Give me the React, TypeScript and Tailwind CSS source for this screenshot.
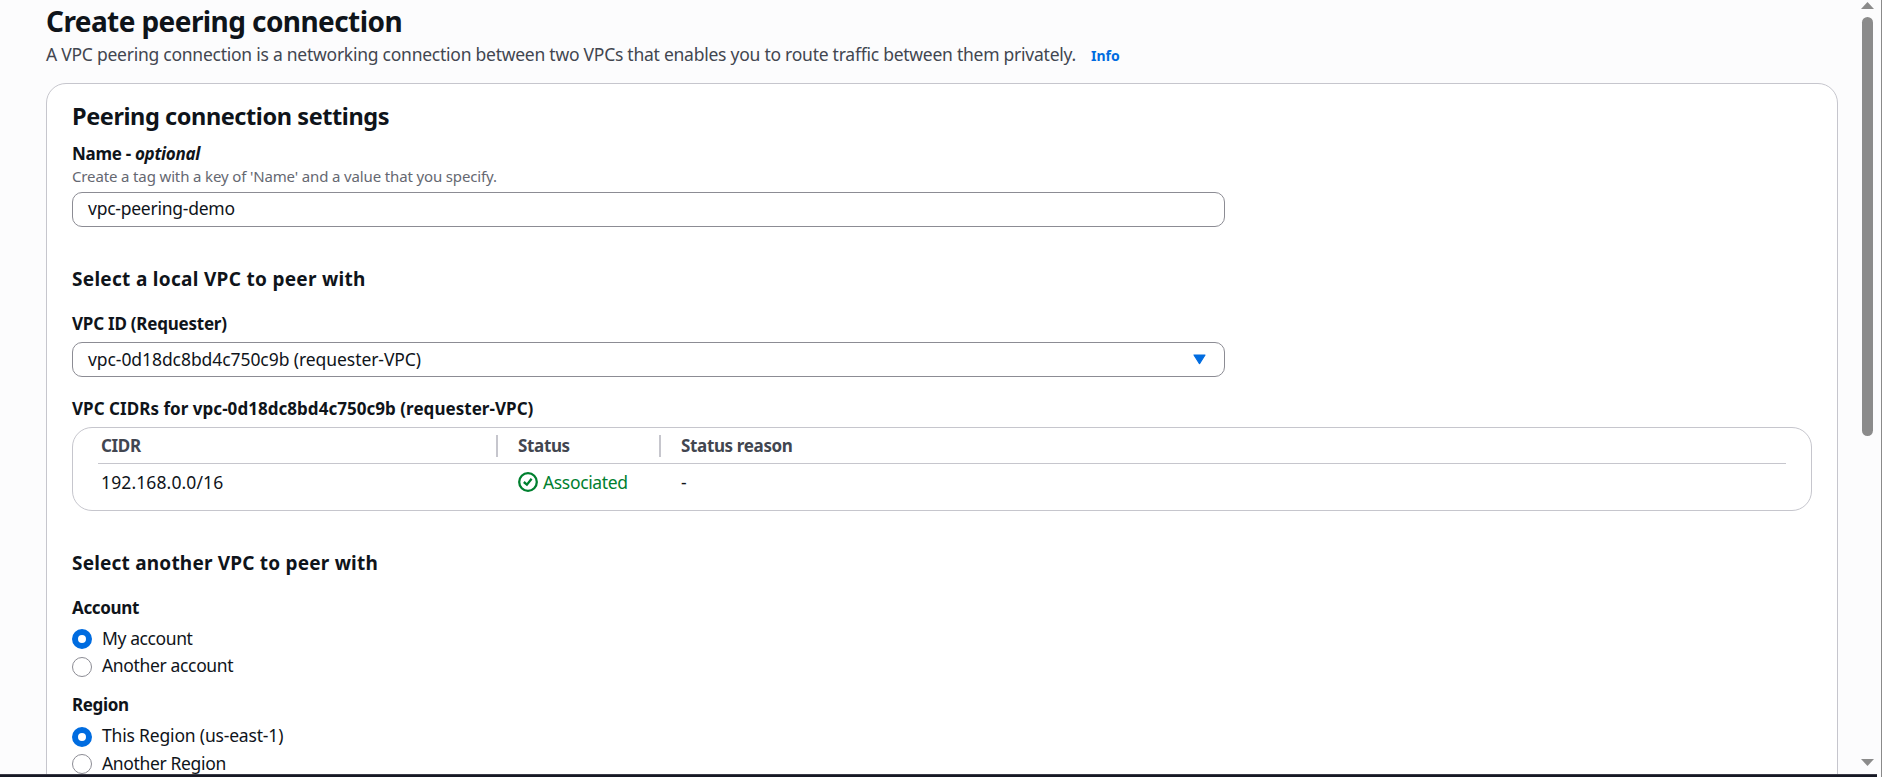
import type { ReactNode } from "react";

function Label({ children, className = "" }: { children: ReactNode; className?: string }) {
  return <div className={`h-6 whitespace-pre text-[17px] leading-6 font-bold ${className}`}>{children}</div>;
}

function SectionTitle({ children, className }: { children: ReactNode; className: string }) {
  return (
    <h3 className={`h-7 self-start whitespace-nowrap text-[19px] leading-7 font-bold ${className}`}>
      {children}
    </h3>
  );
}

function Radio({ label, checked = false, className = "", dot = "mt-[3px]" }: { label: string; checked?: boolean; className?: string; dot?: string }) {
  return (
    <label className={`flex shrink-0 items-start gap-2.5 text-[17.5px] leading-6 ${className}`}>
      <span
        className={`size-5 shrink-0 rounded-full bg-white ${dot} ${checked ? "border-6 border-[#006ce0]" : "border border-[#8c8c94]"}`}
      />
      <span>{label}</span>
    </label>
  );
}

function StatusIcon() {
  return (
    <svg width="20" height="20" viewBox="0 0 20 20" fill="none" stroke="#00802f" strokeWidth="2.3" className="mt-[2px]">
      <circle cx="10" cy="10" r="8.8" />
      <path d="M5.8 10 8.9 12.6 13.6 6.8" />
    </svg>
  );
}

function Scrollbar() {
  return (
    <div className="flex w-[21px] shrink-0 flex-col items-center border-r border-[#8a8a8a] pt-0.5 pr-[7px] pb-[11px]">
      <svg width="13" height="7" viewBox="0 0 13 7" className="shrink-0">
        <path d="M6.5 0 13 7H0Z" fill="#8b8b8b" />
      </svg>
      <div className="mt-2 h-[419px] w-[11px] rounded-full bg-[#8b8b8b]" />
      <svg width="13" height="7" viewBox="0 0 13 7" className="mt-auto shrink-0">
        <path d="M0 0h13L6.5 7Z" fill="#8b8b8b" />
      </svg>
    </div>
  );
}

export default function App() {
  return (
    <div className="flex h-[777px] w-[1882px] overflow-hidden bg-[#fcfcfd] font-['Noto_Sans',sans-serif] text-[#0f141a]">
      <div className="flex min-w-0 flex-1 flex-col">
        <main className="flex min-h-0 flex-1 flex-col overflow-hidden pt-[5px] pr-[23px] pl-[46px]">
          <h1 className="h-8 shrink-0 text-[28px] leading-8 font-bold tracking-[-0.58px]">Create peering connection</h1>
          <div className="mt-[5px] flex h-6 shrink-0 items-baseline gap-[15px] text-[17.5px] leading-6 whitespace-nowrap text-[#424650]">
            <span className="tracking-[-0.25px]">
              A VPC peering connection is a networking connection between two VPCs that enables you to route traffic between them privately.
            </span>
            <a className="text-[14px] font-bold text-[#006ce0]">Info</a>
          </div>

          <section className="mt-[17px] flex h-[820px] shrink-0 flex-col rounded-[20px] border border-[#c6c6cd] bg-white px-[25px]">
            <h2 className="mt-[17px] h-[30px] text-[23.5px] leading-[30px] font-bold tracking-[-0.42px]">Peering connection settings</h2>

            <Label className="mt-[11px] tracking-[-0.3px]">
              Name - <em>optional</em>
            </Label>
            <div className="h-5 text-[15px] leading-5 tracking-[-0.14px] text-[#656871]">
              Create a tag with a key of 'Name' and a value that you specify.
            </div>
            <div className="mt-[6px] h-[35px] w-[1153px] rounded-[10px] border border-[#8c8c94] px-[15px] text-[17.5px] leading-[30px] tracking-[-0.25px]">
              vpc-peering-demo
            </div>

            <SectionTitle className="mt-[38px] tracking-[0.3px]">Select a local VPC to peer with</SectionTitle>
            <Label className="mt-[19px] tracking-[-0.23px]">VPC ID (Requester)</Label>
            <div className="mt-[6px] flex h-[35px] w-[1153px] items-center justify-between rounded-[10px] border border-[#8c8c94] pr-[18px] pl-[15px] text-[17.5px] leading-[32px]">
              <span className="-mt-0.5 tracking-[-0.07px]">vpc-0d18dc8bd4c750c9b (requester-VPC)</span>
              <svg width="13" height="11" viewBox="0 0 13 11">
                <path d="M1 1h11L6.5 9.6Z" fill="#006ce0" stroke="#006ce0" strokeWidth="1.2" strokeLinejoin="round" />
              </svg>
            </div>

            <Label className="mt-[20px] tracking-[0.04px]">VPC CIDRs for vpc-0d18dc8bd4c750c9b (requester-VPC)</Label>
            <div className="mt-[6px] h-[84px] w-[1740px] shrink-0 rounded-[20px] border border-[#c6c6cd] px-[25px] text-[17px] leading-6">
              <div className="flex h-9 items-center border-b border-[#c6c6cd] font-bold tracking-[-0.35px] text-[#424650]">
                <div className="w-[398px] pl-[3px]">CIDR</div>
                <div className="h-[22px] w-[2px] bg-[#c6c6cd]" />
                <div className="w-[161px] pl-5">Status</div>
                <div className="h-[22px] w-[2px] bg-[#c6c6cd]" />
                <div className="pl-5">Status reason</div>
              </div>
              <div className="mt-[6px] flex h-6 text-[17.5px]">
                <div className="w-[420px] pl-[3px] tracking-[0.12px]">192.168.0.0/16</div>
                <div className="flex w-[163px] items-start gap-[5px] text-[#00802f]">
                  <StatusIcon />
                  <span className="tracking-[-0.35px]">Associated</span>
                </div>
                <div>-</div>
              </div>
            </div>

            <SectionTitle className="mt-[38px] tracking-[0.2px]">Select another VPC to peer with</SectionTitle>
            <Label className="mt-[19px] tracking-[-0.35px]">Account</Label>
            <Radio label="My account" checked className="mt-[6px] h-[27px] tracking-[-0.4px]" />
            <Radio label="Another account" className="h-[27px] tracking-[-0.35px]" dot="mt-1" />
            <Label className="mt-[13px] tracking-[-0.35px]">Region</Label>
            <Radio label="This Region (us-east-1)" checked className="mt-[6px] h-7 tracking-[-0.18px]" dot="mt-1" />
            <Radio label="Another Region" className="h-7 tracking-[-0.35px]" />
          </section>
        </main>
        <div className="h-[3px] w-[1877px] shrink-0 border-t border-[#3a3a46] bg-[#161824]" />
      </div>
      <Scrollbar />
    </div>
  );
}
